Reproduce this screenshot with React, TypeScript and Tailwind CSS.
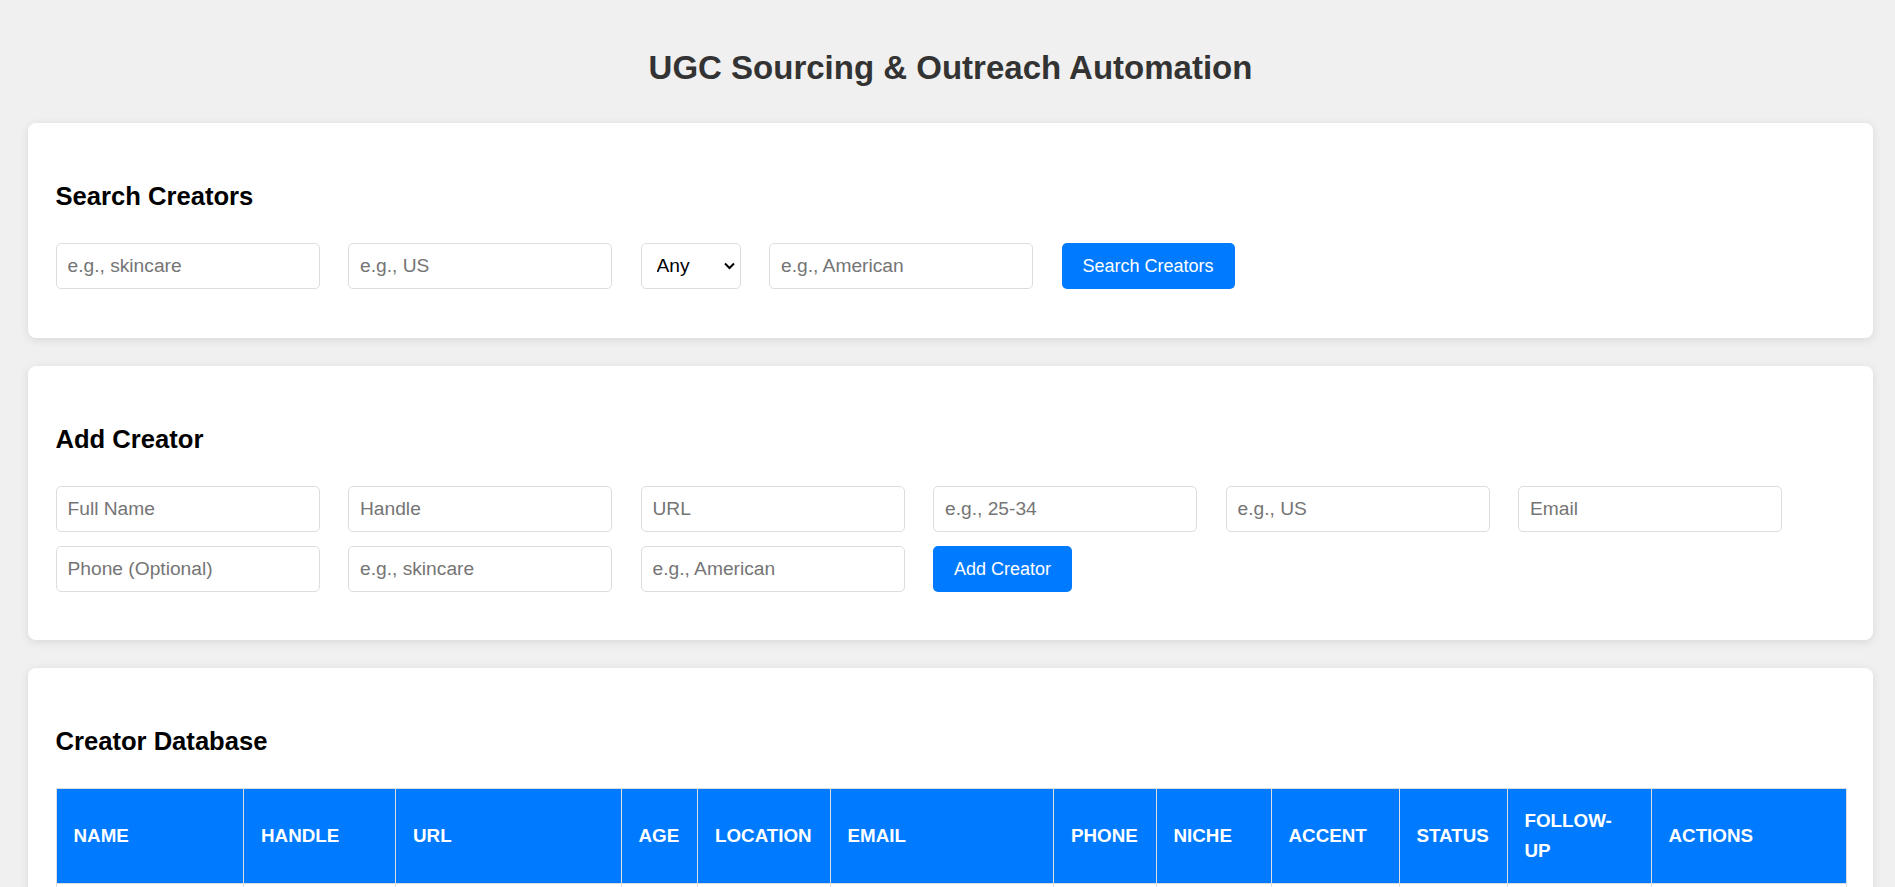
import React from "react";

const inputCls =
  "w-[264px] h-[46px] px-[11px] border border-[#dddddd] rounded-[5px] bg-white text-[19.2px] text-black placeholder:text-[#757575] outline-none";

const btnCls =
  "h-[46px] px-[21px] rounded-[5px] bg-[#007bff] text-white text-[18px] leading-none";

function Card({ title, children, pb }: { title: string; children: React.ReactNode; pb: string }) {
  return (
    <div className={`bg-white rounded-[8px] shadow-[0_2px_10px_rgba(0,0,0,0.1)] px-[27.5px] pt-[28px] ${pb}`}>
      <h2 className="mt-[30px] mb-[32px] text-[25.6px] leading-[30px] font-bold text-black">{title}</h2>
      {children}
    </div>
  );
}

const cols: { label: string; w: number }[] = [
  { label: "Name", w: 187.5 },
  { label: "Handle", w: 152 },
  { label: "URL", w: 225.5 },
  { label: "Age", w: 76.5 },
  { label: "Location", w: 132.5 },
  { label: "Email", w: 223.5 },
  { label: "Phone", w: 102.5 },
  { label: "Niche", w: 115 },
  { label: "Accent", w: 128 },
  { label: "Status", w: 108 },
  { label: "Follow-up", w: 144 },
  { label: "Actions", w: 195 },
];

export default function App() {
  return (
    <div className="h-[887px] overflow-hidden bg-[#f0f0f0] font-['Liberation_Sans',Arial,sans-serif] pl-[28px] pr-[22px] pt-[48px]">
      <h1 className="text-center text-[33px] leading-[40px] font-bold text-[#333333] mb-[35px]">
        UGC Sourcing &amp; Outreach Automation
      </h1>

      <div className="flex flex-col gap-[28.5px]">
        <Card title="Search Creators" pb="pb-[48.5px]">
          <div className="flex flex-wrap gap-x-[28.5px] gap-y-[14px]">
            <input className={inputCls} placeholder="e.g., skincare" />
            <input className={inputCls} placeholder="e.g., US" />
            <div className="relative w-[100px] h-[46px]">
              <select
                className="appearance-none w-full h-full pl-[15px] pr-[20px] border border-[#dddddd] rounded-[5px] bg-white text-[19.2px] text-black outline-none"
                defaultValue="Any"
              >
                <option>Any</option>
                <option>18-24</option>
                <option>25-34</option>
                <option>35-44</option>
              </select>
              <svg
                className="absolute right-[6px] top-[19px] pointer-events-none"
                width="11"
                height="8"
                viewBox="0 0 11 8"
              >
                <polyline points="1,1.5 5.5,6 10,1.5" fill="none" stroke="#000" strokeWidth="2" />
              </svg>
            </div>
            <input className={inputCls} placeholder="e.g., American" />
            <button className={btnCls}>Search Creators</button>
          </div>
        </Card>

        <Card title="Add Creator" pb="pb-[47.5px]">
          <div className="flex flex-wrap gap-x-[28.5px] gap-y-[14px]">
            <input className={inputCls} placeholder="Full Name" />
            <input className={inputCls} placeholder="Handle" />
            <input className={inputCls} placeholder="URL" />
            <input className={inputCls} placeholder="e.g., 25-34" />
            <input className={inputCls} placeholder="e.g., US" />
            <input className={inputCls} placeholder="Email" />
            <input className={inputCls} placeholder="Phone (Optional)" />
            <input className={inputCls} placeholder="e.g., skincare" />
            <input className={inputCls} placeholder="e.g., American" />
            <button className={btnCls}>Add Creator</button>
          </div>
        </Card>

        <Card title="Creator Database" pb="pb-[40px]">
          <table className="table-fixed border-collapse w-[1790px] mt-[2px]">
            <colgroup>
              {cols.map((c) => (
                <col key={c.label} style={{ width: c.w }} />
              ))}
            </colgroup>
            <thead>
              <tr>
                {cols.map((c) => (
                  <th
                    key={c.label}
                    className="bg-[#007bff] text-white text-left align-middle uppercase font-bold text-[18.8px] leading-[30px] px-[17px] py-[17px] border border-[#dddddd]"
                  >
                    {c.label}
                  </th>
                ))}
              </tr>
            </thead>
            <tbody>
              <tr>
                {cols.map((c) => (
                  <td key={c.label} className="h-[52px] border border-[#dddddd] px-[17px]"></td>
                ))}
              </tr>
            </tbody>
          </table>
        </Card>
      </div>
    </div>
  );
}
